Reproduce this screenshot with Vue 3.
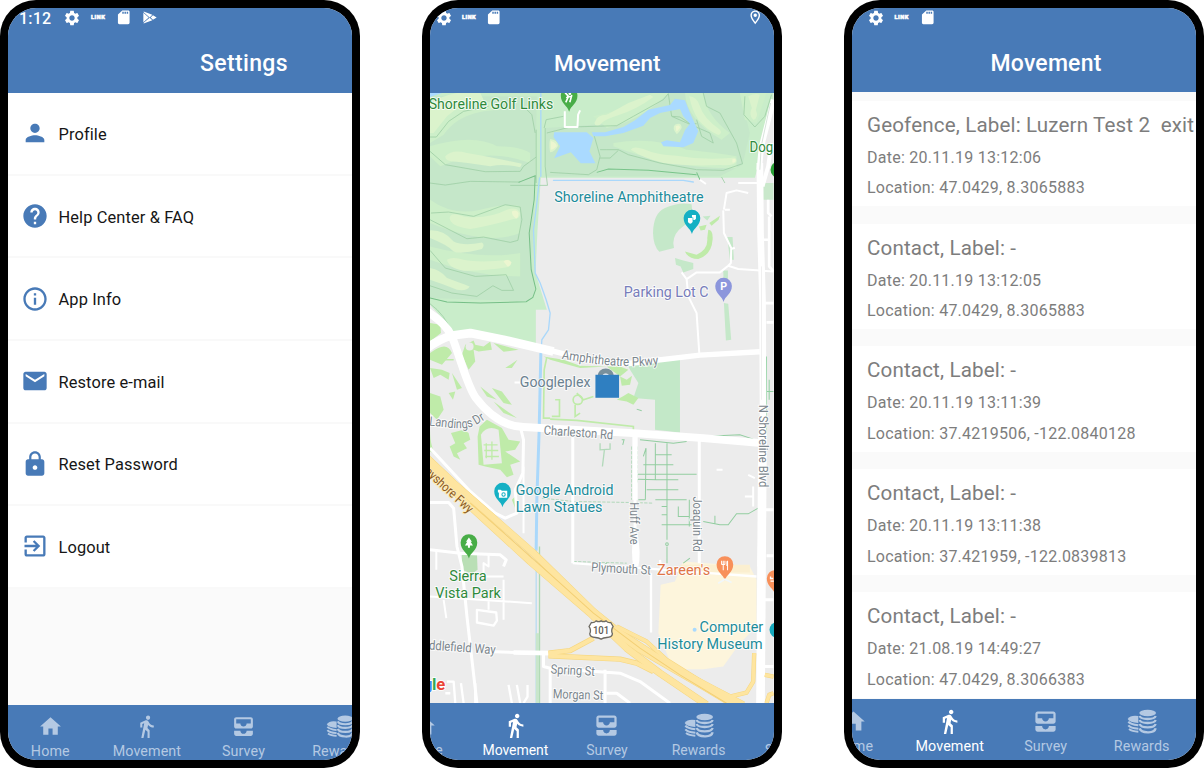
<script setup>
const icons = {
  person: 'M12 12c2.21 0 4-1.79 4-4s-1.79-4-4-4-4 1.79-4 4 1.79 4 4 4zm0 2c-2.67 0-8 1.34-8 4v2h16v-2c0-2.66-5.33-4-8-4z',
  help: 'M12 2C6.48 2 2 6.48 2 12s4.48 10 10 10 10-4.48 10-10S17.52 2 12 2zm1 17h-2v-2h2v2zm2.07-7.75l-.9.92C13.45 12.9 13 13.5 13 15h-2v-.5c0-1.1.45-2.1 1.17-2.83l1.24-1.26c.37-.36.59-.86.59-1.41 0-1.1-.9-2-2-2s-2 .9-2 2H8c0-2.21 1.79-4 4-4s4 1.79 4 4c0 .88-.36 1.68-.93 2.25z',
  info: 'M11 7h2v2h-2zm0 4h2v6h-2zm1-9C6.48 2 2 6.48 2 12s4.48 10 10 10 10-4.48 10-10S17.52 2 12 2zm0 18c-4.41 0-8-3.59-8-8s3.59-8 8-8 8 3.59 8 8-3.59 8-8 8z',
  mail: 'M20 4H4c-1.1 0-1.99.9-1.99 2L2 18c0 1.1.9 2 2 2h16c1.1 0 2-.9 2-2V6c0-1.1-.9-2-2-2zm0 4l-8 5-8-5V6l8 5 8-5v2z',
  lock: 'M18 8h-1V6c0-2.76-2.24-5-5-5S7 3.24 7 6v2H6c-1.1 0-2 .9-2 2v10c0 1.1.9 2 2 2h12c1.1 0 2-.9 2-2V10c0-1.1-.9-2-2-2zm-6 9c-1.1 0-2-.9-2-2s.9-2 2-2 2 .9 2 2-.9 2-2 2zm3.1-9H8.9V6c0-1.71 1.39-3.1 3.1-3.1 1.71 0 3.1 1.39 3.1 3.1v2z',
  logout: 'M10.09 15.59L11.5 17l5-5-5-5-1.41 1.41L12.67 11H3v2h9.67l-2.58 2.59zM19 3H5c-1.11 0-2 .9-2 2v4h2V5h14v14H5v-4H3v4c0 1.1.89 2 2 2h14c1.1 0 2-.9 2-2V5c0-1.1-.9-2-2-2z',
  home: 'M10 20v-6h4v6h5v-8h3L12 3 2 12h3v8z',
  walk: 'M13.5 5.5c1.1 0 2-.9 2-2s-.9-2-2-2-2 .9-2 2 .9 2 2 2zM9.8 8.9L7 23h2.1l1.8-8 2.1 2v6h2v-7.5l-2.1-2 .6-3C14.8 12 16.8 13 19 13v-2c-1.9 0-3.5-1-4.3-2.4l-1-1.6c-.4-.6-1-1-1.7-1-.3 0-.5.1-.8.1L6 8.3V13h2V9.6l1.8-.7',
  inbox: 'M19 3H5c-1.1 0-2 .9-2 2v7c0 1.1.9 2 2 2h14c1.1 0 2-.9 2-2V5c0-1.1-.9-2-2-2zm0 6h-4c0 1.62-1.38 3-3 3s-3-1.38-3-3H5V5h14v4zm-4 7h6v3c0 1.1-.9 2-2 2H5c-1.1 0-2-.9-2-2v-3h6c0 1.66 1.34 3 3 3s3-1.34 3-3z',
  gear: 'M19.14 12.94c.04-.3.06-.61.06-.94 0-.32-.02-.64-.07-.94l2.03-1.58c.18-.14.23-.41.12-.61l-1.92-3.32c-.12-.22-.37-.29-.59-.22l-2.39.96c-.5-.38-1.03-.7-1.62-.94l-.36-2.54c-.04-.24-.24-.41-.48-.41h-3.84c-.24 0-.43.17-.47.41l-.36 2.54c-.59.24-1.13.57-1.62.94l-2.39-.96c-.22-.08-.47 0-.59.22L2.74 8.87c-.12.21-.08.47.12.61l2.03 1.58c-.05.3-.09.63-.09.94s.02.64.07.94l-2.03 1.58c-.18.14-.23.41-.12.61l1.92 3.32c.12.22.37.29.59.22l2.39-.96c.5.38 1.03.7 1.62.94l.36 2.54c.05.24.24.41.48.41h3.84c.24 0 .44-.17.47-.41l.36-2.54c.59-.24 1.13-.56 1.62-.94l2.39.96c.22.08.47 0 .59-.22l1.92-3.32c.12-.22.07-.47-.12-.61l-2.01-1.58zM12 15.6c-1.98 0-3.6-1.62-3.6-3.6s1.62-3.6 3.6-3.6 3.6 1.62 3.6 3.6-1.62 3.6-3.6 3.6z',
  sd: 'M18 2h-8L4.02 8 4 20c0 1.1.9 2 2 2h12c1.1 0 2-.9 2-2V4c0-1.1-.9-2-2-2zm-6 5h-2V4h2v3zm3 0h-2V4h2v3zm3 0h-2V4h2v3z',
  place: 'M12 2C8.13 2 5 5.13 5 9c0 5.25 7 13 7 13s7-7.75 7-13c0-3.87-3.13-7-7-7zM7 9c0-2.76 2.24-5 5-5s5 2.24 5 5c0 2.88-2.88 7.19-5 9.88C9.92 16.21 7 11.85 7 9zM12 6.5a2.5 2.5 0 1 0 0 5 2.5 2.5 0 0 0 0-5z',
}

const settings = [
  { icon: 'person', label: 'Profile' },
  { icon: 'help', label: 'Help Center & FAQ' },
  { icon: 'info', label: 'App Info' },
  { icon: 'mail', label: 'Restore e-mail' },
  { icon: 'lock', label: 'Reset Password' },
  { icon: 'logout', label: 'Logout' },
]

const tabs = [
  { icon: 'home', label: 'Home' },
  { icon: 'walk', label: 'Movement' },
  { icon: 'inbox', label: 'Survey' },
  { icon: 'coins', label: 'Rewards' },
  { icon: 'gear', label: 'Settings' },
]

const events = [
  { title: 'Geofence, Label: Luzern Test 2  exit', date: '20.11.19 13:12:06', location: '47.0429, 8.3065883' },
  { title: 'Contact, Label: -', date: '20.11.19 13:12:05', location: '47.0429, 8.3065883' },
  { title: 'Contact, Label: -', date: '20.11.19 13:11:39', location: '37.4219506, -122.0840128' },
  { title: 'Contact, Label: -', date: '20.11.19 13:11:38', location: '37.421959, -122.0839813' },
  { title: 'Contact, Label: -', date: '21.08.19 14:49:27', location: '47.0429, 8.3066383' },
]

const phones = [
  { id: 'settings', title: 'Settings', time: '1:12', play: true, active: '' },
  { id: 'map', title: 'Movement', place: true, active: 'Movement' },
  { id: 'events', title: 'Movement', active: 'Movement' },
]

const labels = [
  { t: 'Shoreline Golf Links', x: 25, y: 327, w: 374, c: 'park' },
  { t: 'Dog', x: 989, y: 457, w: 71, c: 'park' },
  { t: 'Shoreline Amphitheatre', x: 402, y: 607, w: 449, c: 'poi' },
  { t: 'Parking Lot C', x: 611, y: 893, w: 255, c: 'parking' },
  { t: 'Googleplex', x: 299, y: 1161, w: 212, c: 'office' },
  { t: 'Google Android', x: 287, y: 1486, w: 293, c: 'poi' },
  { t: 'Lawn Statues', x: 287, y: 1536, w: 260, c: 'poi' },
  { t: 'Zareen\u0027s', x: 711, y: 1725, w: 160, c: 'food' },
  { t: 'Sierra', x: 87, y: 1743, w: 112, c: 'park' },
  { t: 'Vista Park', x: 45, y: 1793, w: 197, c: 'park' },
  { t: 'Computer', x: 839, y: 1895, w: 191, c: 'poi' },
  { t: 'History Museum', x: 712, y: 1946, w: 316, c: 'poi' },
]

const streets = [
  { t: 'Charleston Rd', x: 370, y: 1304, w: 209, r: 4 },
  { t: 'N Shoreline Blvd', x: 1016, y: 1215, w: 248, r: 90 },
  { t: 'Huff Ave', x: 629, y: 1507, w: 127, r: 90 },
  { t: 'Joaquin Rd', x: 820, y: 1490, w: 166, r: 90 },
  { t: 'Plymouth St', x: 513, y: 1715, w: 179, r: 3 },
  { t: 'ddlefield Way', x: 25, y: 1949, w: 201, r: 4 },
  { t: 'Spring St', x: 391, y: 2021, w: 133, r: 3 },
  { t: 'Morgan St', x: 398, y: 2095, w: 151, r: 2 },
]

const pinShape = 'M0 40C-4 22-25 16-25-8A25 25 0 1 1 25-8C25 16 4 22 0 40Z'
</script>

<template>
  <main class="stage">
    <section v-for="p in phones" :key="p.id" class="phone" :class="p.id">
      <div class="screen">
        <header class="header">
          <div class="status">
            <span v-if="p.time" class="time">{{ p.time }}</span>
            <span class="cell"><svg class="gear" viewBox="0 0 24 24"><path :d="icons.gear" fill-rule="evenodd" /></svg></span>
            <span class="cell link">LINK</span>
            <span class="cell"><svg class="sd" viewBox="0 0 24 24" preserveAspectRatio="none"><path :d="icons.sd" fill-rule="evenodd" /></svg></span>
            <span v-if="p.play" class="cell">
              <svg class="play" viewBox="0 0 42 38"><path d="M2 1L28 11 20 19 2 3ZM1 5L17 19 1 33ZM2 35L20 20 28 27 2 37ZM30 12L41 19 30 26 23 19Z" /></svg>
            </span>
            <span v-if="p.place" class="cell end"><svg class="place" viewBox="0 0 24 24"><path :d="icons.place" fill-rule="evenodd" /></svg></span>
          </div>
          <h1 class="title">{{ p.title }}</h1>
        </header>

        <ul v-if="p.id === 'settings'" class="content menu">
          <li v-for="s in settings" :key="s.label" class="row">
            <svg class="row-icon" viewBox="0 0 24 24"><path :d="icons[s.icon]" fill-rule="evenodd" /></svg>
            <span class="row-label">{{ s.label }}</span>
          </li>
        </ul>

        <div v-else-if="p.id === 'map'" class="content">
          <svg class="canvas" viewBox="29 280 1032 1830" preserveAspectRatio="none">
            <rect x="29" y="280" width="1032" height="1830" fill="#ececec" />

            <!-- parkland -->
            <path fill="#c9edca" d="M29 280H1061V310L1035 430 1005 534H362L352 690 346 820 380 930H347V1040L200 1010 100 1010 75 965 29 915Z" />
            <path fill="#c5e7c9" d="M29 290H350L345 540 335 790 345 880 320 905 29 895ZM375 385L600 370 730 280H960L990 400 968 495 900 530H375Z" />
            <g fill="#cdefc9">
              <path d="M29 300Q160 270 250 330 120 330 70 405L29 430ZM29 440Q160 400 230 440 300 440 330 460V490Q200 440 60 500L29 470ZM520 350Q620 330 700 280H745Q670 360 560 385ZM580 430Q700 410 800 450 900 460 950 470V505Q760 510 580 440ZM795 280H850Q860 350 930 400L905 420Q800 360 795 280ZM960 280H1040L1010 370 975 360Z" />
              <path d="M29 600Q100 650 180 630 260 610 300 620V700Q200 740 29 670ZM29 740Q180 780 300 760V830Q160 830 29 780Z" />
            </g>
            <g fill="#dbf3cc">
              <path d="M29 315Q55 290 110 280H180L190 300Q120 310 80 350L40 400H29Z" />
              <path d="M75 470Q95 448 140 460 200 470 270 485L305 492 300 503Q250 490 210 500 150 490 95 485Q74 482 75 470Z" />
              <path d="M523 370Q530 345 560 345 590 330 625 310L690 285 700 292Q650 330 590 348 550 360 540 375 525 382 523 370Z" />
              <path d="M632 450Q640 438 670 448 710 466 770 468 850 482 932 475 950 470 950 485 945 500 900 496 800 500 730 490 670 475 632 450Z" />
              <path d="M808 290Q830 290 840 320 850 355 900 390 908 402 895 406 860 390 835 360 815 330 808 290ZM985 290Q1005 280 1020 285L1008 330Q1018 355 1000 360 985 345 996 325ZM765 375Q785 366 785 385 775 402 770 403 755 385 765 375ZM390 418Q412 420 414 438 405 455 390 458 385 435 390 418Z" />
              <path d="M88 655Q90 635 130 650 200 660 260 630 290 620 300 640 300 658 280 658 200 680 150 688 90 680 88 655ZM29 692Q70 690 100 725 130 740 185 728 195 735 185 748 120 765 100 755 80 735 29 715ZM80 780Q95 770 130 780 180 790 265 780 280 792 265 802 180 815 130 813 85 805 80 780ZM29 805Q60 810 80 835 120 850 148 860 140 875 110 870 60 850 29 840Z" />
            </g>
            <g fill="#ecf6d0">
              <path d="M275 635Q290 628 295 640 295 655 288 656 275 648 275 635ZM250 785Q265 775 274 788 270 800 262 800ZM392 424Q410 430 410 440 400 450 392 450ZM767 380Q780 374 780 384 772 395 769 395ZM938 478Q948 474 948 484 942 492 937 488Z" />
            </g>

            <!-- golf course trails -->
            <g fill="none" stroke="#9fcfa6" stroke-width="2.5">
              <path d="M29 412H48L85 365 130 335 205 320M29 455L75 495 195 516 300 515 310 500 348 472M29 550L75 556 150 545 300 547M348 390V550M372 385L378 360 430 350M375 385V500L382 557H270M380 400L450 382 590 378 640 350 730 300 745 282 755 350 870 400 880 430M520 400L540 470 530 510 505 525 390 518M540 450H560L595 450 625 465 720 490 830 510 910 512 968 492 950 430 900 340 860 320 850 280M540 475L570 475 595 452M830 360L845 410 880 430M975 290L972 345 1005 382 1035 350 1055 285M905 532L915 550M757 350L780 352 810 372H830" />
              <path d="M32 640L85 637 160 650 255 615 300 622 305 660 293 722 270 728 190 712 140 717 29 660M29 752L75 805 165 830 258 825 280 872 245 872 218 858 170 890 95 880 29 858M29 912Q75 945 95 1000" />
              <path d="M310 320 335 345 345 400" />
            </g>
            <path fill="none" stroke="#76bf87" stroke-width="3" d="M295 548L345 528 342 600 327 700 333 810 347 868 338 893 318 906 180 910 80 907 29 895" />
            <path fill="none" stroke="#79c48a" stroke-width="3" d="M530 518L565 508 685 512 830 525M830 518L840 540" />

            <!-- water -->
            <path fill="#aadaff" d="M402 398H500L520 415 508 455 526 491H482L452 458 402 476 420 440 400 412Z" />
            <path fill="#aadaff" d="M515 398H555L610 382 645 362 685 330 750 316 765 297 795 302 808 335 835 395 820 430 790 443 730 440 723 428 740 422 780 428 795 392 810 372 790 350 780 328 720 340 690 355 670 378 610 400 555 410H520Z" />
            <path fill="#aadaff" d="M29 280H65L29 292Z" />
            <g fill="none" stroke="#aad8fb" stroke-linecap="round">
              <path stroke-width="4" d="M400 542H790L820 547M358 535L350 610 340 690 345 820 360 850 378 900 390 940 385 990 365 1020 362 1070" />
              <path stroke-width="4" d="M362 282V530" />
              <path stroke-width="9" d="M362 1062L357 1290 350 1500 348 1650" />
              <path stroke-width="4" stroke="#b9dcf2" d="M348 1650V2110" />
            </g>
            <path d="M358 1640V2110" fill="none" stroke="#acd8b2" stroke-width="4" />
            <path d="M347 1900H357V2110H347Z" fill="#c8e6cb" />

            <!-- amphitheatre and planted areas -->
            <path fill="#c5e8c9" d="M735 625Q780 605 815 614L817 635Q815 660 792 678 760 700 760 730L762 745 718 756Q700 740 699 700 700 640 735 625ZM765 775L790 782 820 790V808L790 818 782 800 768 795ZM922 712H938L942 780H930ZM910 812H924V875H912ZM912 910L925 912 934 1020 918 1022ZM848 650L872 648 862 662Z" />
            <path fill="#bfeba9" d="M865 690Q880 690 878 720 875 765 835 778 805 778 795 755L830 765Q865 750 862 715ZM837 680L860 675 855 690 842 692ZM868 670L900 648 896 660 875 678Z" />
            <path fill="#c3e8c8" d="M620 1090 780 1080V1298L705 1290V1200L640 1195 655 1150 630 1110Z" />
            <g fill="#bfeba9">
              <path d="M29 970L60 975 62 1000 29 1025ZM29 1060Q80 1020 95 1060L65 1095 29 1080ZM135 1035 160 1022 165 1035 190 1040 210 1025 215 1050 175 1055 160 1050 165 1085 145 1110 125 1065ZM220 1030L295 1050 250 1056ZM255 1105L292 1080 275 1105ZM29 1105 65 1110 88 1120 85 1140 60 1125 40 1135ZM95 1120L125 1165 110 1170Z" />
              <path d="M370 1070L430 1080 480 1098 560 1100 600 1100 625 1110 600 1130 560 1100 480 1105 390 1080ZM600 1130L620 1140 636 1128 630 1155 605 1158ZM180 1160L230 1200 200 1190ZM215 1165L245 1175 275 1215 250 1210ZM220 1205L290 1255 250 1240ZM29 1180L60 1190 70 1230 50 1260 29 1240ZM85 1180 105 1175 98 1200ZM590 1200Q610 1190 625 1180L655 1195 640 1215 620 1205Z" />
              <path d="M92 1300L130 1290 145 1300 150 1320 130 1330 140 1345 110 1360 120 1380 100 1370 88 1340 105 1330ZM178 1280 200 1260 245 1285 265 1320 300 1325 285 1350 255 1355 300 1385 270 1395 280 1425 260 1432 240 1410 195 1400 175 1395 172 1310ZM29 1290Q30 1350 50 1365L29 1355ZM275 1500L285 1490V1525Z" />
            </g>
            <path fill="#ececec" d="M182 1305Q200 1275 235 1290L245 1390 190 1395Z" />
            <g fill="none" stroke="#bfeba9" stroke-width="4">
              <path d="M190 1335H232M192 1352H234M195 1370H236M198 1330V1375M215 1325V1380" />
            </g>
            <circle cx="148" cy="1040" r="12" fill="#ececec" />
            <g fill="none" stroke="#bfeba9" stroke-width="5">
              <path d="M380 1072L372 1110 370 1255H390M405 1200H418V1250H395M470 1180 490 1200 520 1190M465 1215V1250L480 1240M390 1258 470 1262 640 1280V1300M100 1080H75" />
              <circle cx="473" cy="1200" r="14" />
            </g>
            <path fill="#fdf5dc" d="M722 1755L765 1745 790 1685 990 1700 1010 1740V1880L960 1930 910 2000 850 2008H760L715 1900Z" />
            <path fill="#fbefd0" d="M780 1695H990V1718H800Z" />

            <!-- green paths south of Charleston Rd -->
            <g fill="none" stroke="#92cda0" stroke-width="3">
              <path d="M660 1320 760 1330 800 1325M605 1320 612 1320 608 1335M670 1370 678 1345 676 1500M652 1423H830M652 1438 710 1440 775 1440M706 1330V1440M741 1330V1620M706 1365H755M670 1395H760M680 1470H775M655 1500H676M706 1500 800 1500M725 1520H740M775 1520V1550H808M725 1545H740M725 1575H815M808 1500V1580M741 1640V1690M850 1565 900 1575 925 1575 950 1542H985L1015 1525M885 1548V1570M650 1228 665 1233M545 1700 560 1690M790 1690 810 1675M845 1310 960 1305 1000 1318" />
              <circle cx="741" cy="1633" r="4" />
              <path stroke-dasharray="10 4" stroke-width="2" d="M365 1495 460 1505 630 1508 700 1510M635 1340V1500M652 1340V1450M460 1685 620 1690" />
            </g>
            <path d="M540 1330V1350L570 1348V1330M553 1350 547 1400" fill="none" stroke="#b2d9ba" stroke-width="4" />
            <path d="M125 1660H170L172 1710 155 1722 125 1710Z" fill="#b9dfb5" />
            <path d="M1040 1070V1320M1040 1175H1061M1048 1140V1200" stroke="#8fd0a0" stroke-width="3" fill="none" />
            <path d="M1030 550H1061V600H1030Z" fill="#c9e8cb" />

            <!-- minor roads -->
            <g fill="none" stroke="#fff" stroke-linejoin="round">
              <path stroke-width="6" d="M434 335V382H472L474 345 480 332M840 540 858 553M955 550H1015M910 632 912 700 934 745 933 790 925 798M785 818 800 838 830 818H900L925 798 955 808 1061 815M912 630 920 580 950 572 985 580M800 838 805 890 830 940 838 1060M915 630H930M934 748 945 744" />
              <path stroke-width="8" d="M1045 600V640L1055 650M1048 650V800L1061 815M1028 720H1048M1028 910H1061M1040 968H1061" />
              <path stroke-width="9" d="M458 1310V1690M838 1320V1690M645 1300V1690" />
              <path stroke-width="16" d="M645 1310V1500" />
              <path stroke-width="9" d="M300 1280 310 1320 308 1420 285 1470 290 1540 255 1555 225 1540 150 1475 29 1345M29 1508H85L100 1525 110 1640 125 1700 140 1850 170 2110M29 1650 120 1660 240 1665 258 1680 250 1700" />
              <path stroke-width="6" d="M205 1660V1700L190 1690V1730H250M250 1740V1860M29 1790 335 1810M70 1800 78 1855M48 1650V1710M205 1800V1830M310 1400V1600M283 1148H300M890 1410H908M985 1425 1005 1435M1000 1460V1520M975 1490H1000" />
              <path stroke-width="7" d="M170 1830 228 1838 230 1862 220 1877 170 1868ZM80 2045 100 2045 105 2110M75 2080H90M122 2050 130 2110M165 2050V2110M265 2055 275 2110M290 2055 300 2110M322 2055V2090L310 2110M458 1690 870 1720 1010 1730M693 1720V1898M645 1690 640 1720M720 1680 725 1720" />
              <path stroke-width="9" d="M200 1955 360 1960 390 1960M370 1960V2000L390 2005V2110M390 2005 600 2020 660 2045 750 2110M555 2010V2110M560 2080H590L630 2110M1040 1668H1061M1036 1530H1061M1020 1800H1061M1030 2000H1061" />
            </g>
            <path d="M640 1600Q632 1660 640 1700H655Q664 1660 652 1600Z" fill="#fff" />

            <!-- main roads -->
            <g fill="none" stroke="#fff" stroke-linejoin="round">
              <path stroke-width="24" d="M20 935Q75 970 95 1010C125 1090 140 1155 165 1192C205 1245 255 1280 310 1282L640 1300 850 1315 1025 1330" />
              <path stroke-width="26" d="M20 1045Q55 1020 90 1008L150 1000 250 1020 400 1055" />
              <path stroke-width="16" d="M390 1052 500 1080 620 1092 840 1066 1020 1056" />
              <path stroke-width="20" d="M1020 490 1022 700 1028 900 1030 1300 1028 1500 1022 1700" />
              <path stroke-width="16" d="M1061 300 1025 440 1018 510" />
              <path stroke-width="26" d="M1028 1300 1022 2110" />
              <path stroke-width="12" d="M1055 430 1045 500 1028 560" />
              <path stroke-width="14" d="M280 1958 390 1960" />
            </g>
            <path d="M1052 310 1024 440 1020 510" stroke="#d9e4dc" stroke-width="3" fill="none" />
            <path d="M1025 800V1200" stroke="#e8e8e8" stroke-width="2" fill="none" />

            <!-- highway 101 -->
            <g fill="none" stroke-linecap="butt" stroke-linejoin="round">
              <g stroke="#f6d780">
                <path stroke-width="16" d="M385 1960 450 1952 520 1915M385 1968 600 1978 650 1990 700 2015" />
                <path stroke-width="13" d="M590 1880 640 1905 680 1925 740 1980 860 2055 930 2090 980 2078 1000 2045 1003 1960M1035 2025 1061 2030M1040 2110 1048 2085 1061 2080" />
                <path stroke-width="22" d="M15 1370 100 1450 340 1660 520 1835 600 1900 770 2010 970 2115" />
                <path stroke-width="22" d="M15 1392 90 1465 330 1685 510 1840 620 1945 720 2020 860 2115" />
                <path stroke-width="20" d="M520 1850 660 1950 850 2060 950 2120" />
              </g>
              <g stroke="#fee5a0">
                <path stroke-width="12" d="M385 1960 450 1952 520 1915M385 1968 600 1978 650 1990 700 2015" />
                <path stroke-width="10" d="M590 1880 640 1905 680 1925 740 1980 860 2055 930 2090 980 2078 1000 2045 1003 1960M1035 2025 1061 2030M1040 2110 1048 2085 1061 2080" />
                <path stroke-width="19" d="M15 1370 100 1450 340 1660 520 1835 600 1900 770 2010 970 2115" />
                <path stroke-width="19" d="M15 1392 90 1465 330 1685 510 1840 620 1945 720 2020 860 2115" />
                <path stroke-width="17" d="M520 1850 660 1950 850 2060 950 2120" />
              </g>
              <path stroke="#f3cf74" stroke-width="3" d="M150 1510 340 1678 520 1840 660 1945 780 2025 920 2110" />
            </g>

            <!-- street names -->
            <g class="street">
              <text v-for="s in streets" :key="s.t" :transform="`translate(${s.x} ${s.y}) rotate(${s.r})`" :textLength="s.w" lengthAdjust="spacingAndGlyphs">{{ s.t }}</text>
              <path id="amph" d="M424 1077Q530 1096 610 1099 660 1101 740 1092" fill="none" stroke="none" />
              <text textLength="294" lengthAdjust="spacingAndGlyphs"><textPath href="#amph" textLength="294" lengthAdjust="spacingAndGlyphs">Amphitheatre Pkwy</textPath></text>
              <path id="land" d="M26 1277 100 1285Q145 1289 170 1274L215 1246" fill="none" stroke="none" />
              <text><textPath href="#land" textLength="176" lengthAdjust="spacingAndGlyphs">Landings Dr</textPath></text>
              <text class="fwy" transform="translate(11 1419) rotate(42.5)" textLength="182" lengthAdjust="spacingAndGlyphs">ayshore Fwy</text>
            </g>

            <!-- route shield -->
            <path d="M514 1868Q522 1870 528 1863 536 1868 543 1863 550 1868 558 1863 564 1870 572 1868L579 1880Q572 1890 577 1902 576 1912 560 1913 550 1914 543 1918 536 1914 526 1913 510 1912 509 1902 514 1890 507 1880Z" fill="#fff" stroke="#6d6a63" stroke-width="4" />
            <text class="shield" x="543" y="1901" text-anchor="middle" textLength="49" lengthAdjust="spacingAndGlyphs">101</text>

            <!-- places -->
            <g transform="translate(447 296)"><path :d="pinShape" fill="#48ad47" /><path d="M-12-17-2-6M-10 12-2-6 8-4M-2-8-8 0M2 12 8-10 4 4" stroke="#fff" stroke-width="5" fill="none" /><circle cx="2" cy="-14" r="4" fill="#fff" /></g>
            <g transform="translate(816 663)"><path :d="pinShape" fill="#15b0c4" /><path d="M-12-8H2V4Q-5 14-12 4ZM0-17H12V-6Q8 0 4-3V-10H0Z" fill="#fff" /></g>
            <g transform="translate(911 867)"><path :d="pinShape" fill="#8c96dc" /><text class="glyph" x="0" y="5" text-anchor="middle">P</text></g>
            <g transform="translate(557 1132)"><circle cy="-1" r="25" fill="#78909c" /><circle cy="-1" r="10" fill="#fff" /></g>
            <g transform="translate(247 1482)"><path :d="pinShape" fill="#15b0c4" /><path d="M-14-12H-6L-2-9H14V12H-11V-4H-14Z" fill="#fff" /><circle cx="3" cy="2" r="5" fill="none" stroke="#15b0c4" stroke-width="3" /></g>
            <g transform="translate(146 1636)"><path :d="pinShape" fill="#48ad47" /><path d="M0-23 9-10H5L12 1H3V8H-3V1H-12L-5-10H-9Z" fill="#fff" /></g>
            <g transform="translate(915 1702)"><path :d="pinShape" fill="#f8905a" /><path d="M-10-19V-8M-5-19V-8M0-19V-8M-10-8H0M-5-8V9M8-19V9M6-18V-5H9" stroke="#fff" stroke-width="3" fill="none" /></g>
            <path d="M895 1750 915 1738 935 1748" stroke="#f1f7fa" stroke-width="5" fill="none" />
            <g transform="translate(1066 1744)"><path :d="pinShape" fill="#f8905a" /><path d="M-14-14V-8H-6M-14 0H-4" stroke="#fff" stroke-width="4" fill="none" /></g>
            <circle cx="1077" cy="510" r="25" fill="#2aa036" />
            <circle cx="1073" cy="1890" r="24" fill="#15a9bd" />
            <circle cx="824" cy="1890" r="6" fill="#aadaff" />
            <rect x="526" y="1125" width="71" height="69" fill="#2f7fc1" />

            <text v-for="l in labels" :key="l.t" class="label" :class="l.c" :x="l.x" :y="l.y" :textLength="l.w" lengthAdjust="spacingAndGlyphs">{{ l.t }}</text>

            <text class="brand" y="2069"><tspan x="8" fill="#4285f4">g</tspan><tspan x="35" fill="#34a853">l</tspan><tspan x="48" fill="#ea4335">e</tspan></text>
          </svg>
        </div>

        <div v-else class="content events-list">
          <article v-for="(e, i) in events" :key="i" class="card">
            <h2>{{ e.title }}</h2>
            <p>Date: {{ e.date }}</p>
            <p>Location: {{ e.location }}</p>
          </article>
        </div>

        <nav class="nav">
          <div v-for="t in tabs" :key="t.label" class="tab" :class="{ active: t.label === p.active }">
            <svg v-if="t.icon === 'coins'" class="coins" viewBox="855 445 90 78">
              <g fill="currentColor"><ellipse cx="917" cy="457" rx="25" ry="10" /><path d="M889 466Q866 462 857 475 862 486 889 487Z" /></g>
              <g fill="none" stroke="currentColor" stroke-width="7">
                <path d="M893 466Q896 475 917 475T941 466M893 478Q896 487 917 487T941 478M893 490Q896 500 917 500T941 490M893 503Q896 514 917 515T941 503" />
                <path stroke-width="6" d="M859 483Q865 491 889 494M859 494Q865 502 889 504M861 505Q870 512 889 513" />
              </g>
            </svg>
            <svg v-else class="tab-icon" viewBox="0 0 24 24"><path :d="icons[t.icon]" fill-rule="evenodd" /></svg>
            <span>{{ t.label }}</span>
          </div>
        </nav>
      </div>
    </section>
  </main>
</template>

<style>
body { background: #fff; overflow: hidden; }
</style>

<style scoped>
.stage {
  display: flex;
  gap: 62.5px;
  width: 1204px;
  height: 768px;
  font-family: Roboto, "Liberation Sans", sans-serif;
}
.phone {
  flex: none;
  box-sizing: border-box;
  width: 359.5px;
  height: 768px;
  padding: 8px;
  border-radius: 36px;
  background: #000;
}
.screen {
  display: flex;
  flex-direction: column;
  height: 752px;
  overflow: hidden;
  border-radius: 28px;
  background: #fafafa;
}
.header {
  flex: none;
  height: 85.2px;
  color: #fff;
  background: #487ab7;
}
.events .header { height: 84.4px; }
.status { display: flex; align-items: center; height: 19px; padding-left: 11px; }
.map .status { padding-left: 2.2px; }
.events .status { padding-left: 10.7px; }
.time { width: 40.2px; font-size: 16px; font-weight: 500; line-height: 19px; letter-spacing: 0.2px; }
.settings .time { padding-top: 1px; }
.cell { display: flex; justify-content: center; width: 26px; }
.map .cell { width: 24.6px; }
.map .cell.end { margin-left: auto; margin-right: 5.5px; }
.cell svg { fill: #fff; }
.gear { width: 18px; height: 18px; }
.sd { width: 17.5px; height: 16.5px; }
.play { width: 14px; height: 13px; }
.place { width: 16.5px; height: 16.5px; }
.link { font-size: 5.6px; font-weight: 900; line-height: 6px; letter-spacing: 0.5px; padding-bottom: 2px; -webkit-text-stroke: 0.5px #fff; }
.title {
  margin: 20px 0 0;
  padding-left: 192px;
  font-size: 23px;
  font-weight: 500;
  line-height: 34px;
  letter-spacing: 0.35px;
  white-space: nowrap;
}
.map .title { margin-top: 19px; padding-left: 124px; font-size: 22.4px; letter-spacing: 0; }
.events .title { padding-left: 138.5px; letter-spacing: 0.2px; }

.content { flex: 1; min-height: 0; overflow: hidden; }
.menu { margin: 0; padding: 0; list-style: none; }
.row {
  display: flex;
  align-items: center;
  box-sizing: border-box;
  height: 82.6px;
  padding-left: 13px;
  border-bottom: 2px solid #f9f9f9;
  background: #fff;
  color: #161616;
  font-size: 16.4px;
  letter-spacing: 0.12px;
}
.row-icon { width: 28px; height: 28px; margin-right: 9.5px; fill: #487ab7; }
.row-label { padding-top: 2px; }

.events-list { padding-top: 8.3px; }
.card {
  box-sizing: border-box;
  height: 105.8px;
  margin-bottom: 17.1px;
  padding: 12px 0 0 15px;
  background: #fff;
  color: #7d7d7d;
  white-space: pre;
}
.card h2 { margin: 0; height: 30px; font-size: 20.6px; font-weight: 400; line-height: 24px; letter-spacing: 0.14px; }
.card p { margin: 0; font-size: 16px; line-height: 30.5px; letter-spacing: 0.24px; }

.nav {
  display: flex;
  flex: none;
  height: 55px;
  color: #fff;
  background: #487ab7;
}
.map .nav { height: 56.6px; }
.events .nav { height: 61px; }
.tab {
  display: flex;
  flex: none;
  flex-direction: column;
  align-items: center;
  width: 96.6px;
  padding-top: 9px;
  color: #b4c9e3;
  font-size: 14.3px;
  letter-spacing: 0.1px;
  line-height: 18px;
}
.settings .tab span { padding-top: 1px; }
.tab:first-child { margin-left: -6px; }
.map .tab { width: 91.6px; font-size: 14px; letter-spacing: -0.05px; }
.map .tab:first-child { margin-left: -52px; }
.events .tab { width: 96px; }
.events .tab:first-child { margin-left: -46.3px; }
.tab.active { color: #fff; }
.tab-icon { width: 27px; height: 27px; margin-bottom: 2px; fill: currentColor; }
.coins { width: 30px; height: 26px; margin: 1px 0 2px; }

.canvas { display: block; width: 100%; height: 100%; }
.label { font-size: 45px; paint-order: stroke; stroke: rgba(255, 255, 255, 0.75); stroke-width: 6px; stroke-linejoin: round; }
.park { fill: #2f8a3c; }
.poi { fill: #1c8c9b; }
.parking { fill: #777dbb; }
.office { fill: #6b8190; }
.food { fill: #df7446; }
.street text { font-size: 39px; fill: #7b868d; paint-order: stroke; stroke: rgba(255, 255, 255, 0.8); stroke-width: 6px; }
.street .fwy { fill: #8a5a1e; stroke: #fdebb8; }
.shield { font-size: 31px; font-weight: 500; fill: #5d5a55; }
.glyph { font-size: 32px; font-weight: 700; fill: #fff; }
.brand { font-size: 50px; font-weight: 700; paint-order: stroke; stroke: #fff; stroke-width: 5px; }
</style>
